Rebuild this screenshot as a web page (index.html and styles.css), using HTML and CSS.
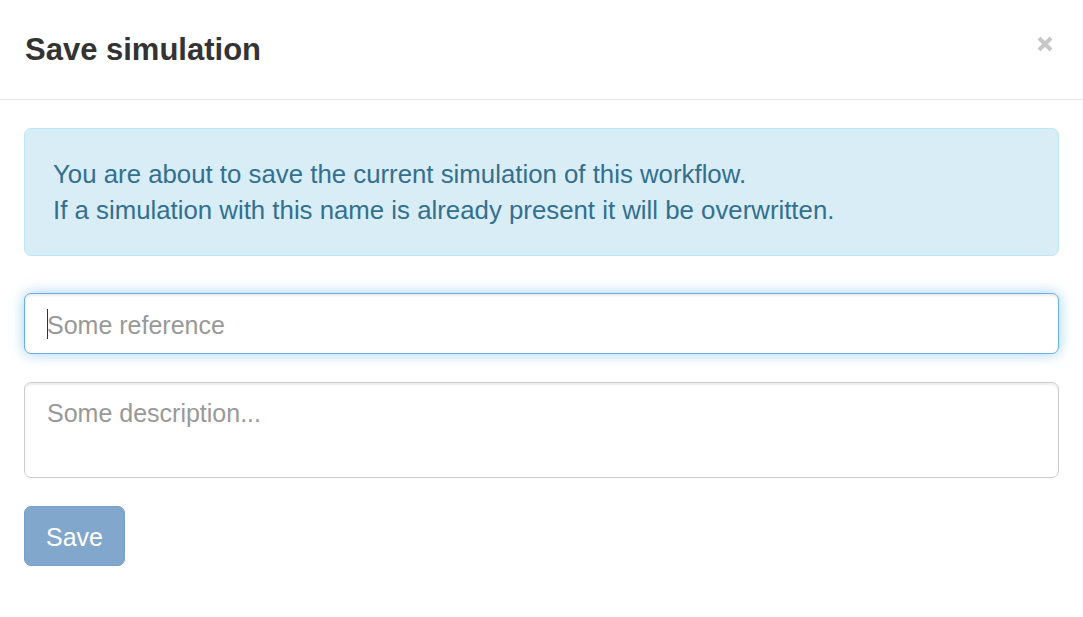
FILE: index.html
```html
<!DOCTYPE html>
<html lang="en">
<head>
<meta charset="utf-8">
<title>Save simulation</title>
<link rel="stylesheet" href="styles.css">
</head>
<body>
<div class="modal">
  <div class="modal-header">
    <h4 class="modal-title">Save simulation</h4>
    <button class="close" type="button" aria-label="Close">
      <svg width="16" height="16" viewBox="0 0 16 16" aria-hidden="true">
        <path d="M2 2 L14 14 M14 2 L2 14" stroke="#c7c7c7" stroke-width="4" stroke-linecap="butt" fill="none"/>
      </svg>
    </button>
  </div>
  <div class="modal-body">
    <div class="alert">
      You are about to save the current simulation of this workflow.<br>
      If a simulation with this name is already present it will be overwritten.
    </div>
    <div class="form-group">
      <div class="input-wrap">
        <input class="form-control focused" type="text" placeholder="Some reference">
        <span class="caret-mark"></span>
      </div>
    </div>
    <div class="form-group">
      <textarea class="form-control textarea" rows="2" placeholder="Some description..."></textarea>
    </div>
    <button class="btn" type="button" disabled>Save</button>
  </div>
</div>
</body>
</html>
```
FILE: styles.css
```css
* {
  box-sizing: border-box;
}

html, body {
  margin: 0;
  padding: 0;
  background: #ffffff;
}

body {
  font-family: "Liberation Sans", Arial, Helvetica, sans-serif;
  color: #333333;
  width: 1083px;
  height: 617px;
  overflow: hidden;
}

.modal {
  background: #ffffff;
}

.modal-header {
  display: flex;
  justify-content: space-between;
  align-items: flex-start;
  padding: 26px 30px 26px 24px;
  border-bottom: 1px solid #e5e5e5;
}

.modal-title {
  margin: 0;
  font-size: 31px;
  line-height: 47px;
  font-weight: bold;
  color: #333333;
  padding-left: 1px;
}

.close {
  margin: 10px 0 0 0;
  padding: 0;
  border: 0;
  background: transparent;
  width: 16px;
  height: 16px;
  display: flex;
  cursor: pointer;
}

.modal-body {
  padding: 28px 24px;
}

.alert {
  background: #d9edf7;
  border: 1px solid #bce8f1;
  border-radius: 7px;
  color: #33708f;
  font-size: 25.8px;
  line-height: 36px;
  padding: 27px 27px 27px 28px;
  margin-bottom: 37px;
}

.form-group {
  margin-bottom: 28px;
}

.input-wrap {
  position: relative;
}

.form-control {
  display: block;
  width: 100%;
  font-family: "Liberation Sans", Arial, Helvetica, sans-serif;
  font-size: 25px;
  line-height: 36px;
  color: #555555;
  background: #ffffff;
  border: 1px solid #cccccc;
  border-radius: 7px;
  padding: 11px 22px;
  box-shadow: inset 0 2px 2px rgba(0, 0, 0, 0.075);
  outline: none;
  margin: 0;
}

.form-control::placeholder {
  color: #999999;
  opacity: 1;
}

.form-control.focused {
  height: 61px;
  padding-top: 13px;
  padding-bottom: 10px;
  border-color: #66afe9;
  box-shadow: inset 0 2px 2px rgba(0, 0, 0, 0.075), 0 0 14px rgba(102, 175, 233, 0.6);
}

.caret-mark {
  position: absolute;
  left: 23px;
  top: 16px;
  width: 1px;
  height: 30px;
  background: #333333;
}

.textarea {
  height: 96px;
  resize: none;
  padding-top: 12px;
}

.btn {
  display: inline-block;
  font-family: "Liberation Sans", Arial, Helvetica, sans-serif;
  font-size: 25px;
  line-height: 36px;
  color: #ffffff;
  background: #82a7cc;
  border: 1px solid #7a9fc6;
  border-radius: 7px;
  padding: 12px 21px 10px;
  margin: 0;
  cursor: not-allowed;
}
```
